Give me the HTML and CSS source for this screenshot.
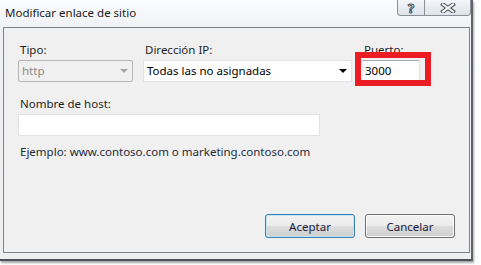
FILE: index.html
```html
<!DOCTYPE html>
<html>
<head>
  <meta charset="utf-8">
  <title>Modificar enlace de sitio</title>
  <link rel="stylesheet" href="styles.css">
</head>
<body>
  <div class="window">
    <div class="titlebar">
      <span class="title">Modificar enlace de sitio</span>
      <div class="caption">
        <span class="cap_btn help">?</span>
        <span class="cap_btn close">
          <svg width="16" height="10" viewBox="0 0 16 10">
            <path d="M3 1.5 L13 8.5 M13 1.5 L3 8.5" stroke="#4a4f57" stroke-width="4" stroke-linecap="square" fill="none"/>
            <path d="M3 1.5 L13 8.5 M13 1.5 L3 8.5" stroke="#ffffff" stroke-width="2" stroke-linecap="square" fill="none"/>
          </svg>
        </span>
      </div>
    </div>
    <div class="client">
      <div class="fields">
        <div class="field">
          <label>Tipo:</label>
          <div class="select disabled">http<span class="arrow"></span></div>
        </div>
        <div class="field">
          <label>Dirección IP:</label>
          <div class="select">Todas las no asignadas<span class="arrow"></span></div>
        </div>
        <div class="field">
          <label>Puerto:</label>
          <div class="textbox port">3000</div>
        </div>
      </div>
      <div class="host">
        <label>Nombre de host:</label>
        <div class="textbox wide"></div>
      </div>
      <p class="example">Ejemplo: www.contoso.com o marketing.contoso.com</p>
      <div class="actions">
        <button class="button default">Aceptar</button>
        <button class="button">Cancelar</button>
      </div>
    </div>
    <div class="highlight"></div>
  </div>
</body>
</html>
```

FILE: styles.css
```css
html {
  font-family: "Noto Sans", "Open Sans", sans-serif;
  font-size: 11.5px;
}
body {
  margin: 0;
  width: 481px;
  height: 265px;
  background-color: #ffffff;
  overflow: hidden;
}
.window {
  position: relative;
  width: 473px;
  height: 261px;
  box-sizing: border-box;
  padding-left: 3px;
  background: linear-gradient(#fbfcfd, #eef1f4 30px, #eceef0);
  border-right: 2px solid #5f6266;
  border-bottom: 2px solid #4e5155;
  box-shadow: 1px 2px 2px rgba(0,0,0,.35);
}
.titlebar {
  height: 27px;
  display: flex;
  align-items: flex-start;
  justify-content: space-between;
}
.title {
  margin: 5px 0 0 2px;
  color: #1b1b1b;
  line-height: 16px;
}
.caption {
  display: flex;
}
.cap_btn {
  height: 16px;
  box-sizing: border-box;
  border: 1px solid #8b8f96;
  border-top: none;
  background: linear-gradient(#f4f6f9, #dde3ea);
  display: flex;
  align-items: center;
  justify-content: center;
}
.help {
  width: 28px;
  border-radius: 0 0 0 4px;
  font-weight: bold;
  font-size: 13px;
  color: #ffffff;
  -webkit-text-stroke: 1px #4a4f57;
  line-height: 14px;
}
.close {
  width: 46px;
  border-left: none;
  border-radius: 0 0 4px 0;
}
.client {
  width: 467px;
  height: 226px;
  box-sizing: border-box;
  border: 1px solid #7f8388;
  background-color: #f0f0f0;
  padding: 14px;
  display: flex;
  flex-direction: column;
  color: #1e1e1e;
}
label {
  display: block;
  line-height: 16px;
  padding-left: 2px;
  margin-bottom: 2px;
}
.fields {
  display: grid;
  grid-template-columns: 115px 209px 58px;
  column-gap: 10px;
}
.select {
  position: relative;
  height: 22px;
  box-sizing: border-box;
  border: 1px solid #e2e3ea;
  background-color: #ffffff;
  padding-left: 3px;
  line-height: 20px;
  color: #000000;
}
.select.disabled {
  border: 1px solid #b5b5b5;
  border-radius: 2px;
  background-color: #f0f0f0;
  color: #8a8a8a;
}
.arrow {
  position: absolute;
  right: 4px;
  top: 8px;
  border-left: 4px solid transparent;
  border-right: 4px solid transparent;
  border-top: 4px solid #000000;
}
.disabled .arrow {
  border-top-color: #a6a6a6;
}
.textbox {
  height: 21px;
  box-sizing: border-box;
  border: 1px solid #abadb3;
  border-color: #abadb3 #e2e3ea #e3e9ef #e2e3ea;
  background-color: #ffffff;
  padding-left: 2px;
  line-height: 19px;
  color: #000000;
}
.textbox.wide {
  width: 302px;
  height: 22px;
  border-color: #e2e3ea;
}
.host {
  margin-top: 14px;
}
.example {
  margin: 8px 0 0 2px;
  line-height: 16px;
  color: #1f2b38;
}
.actions {
  margin-top: auto;
  display: flex;
  justify-content: flex-end;
  gap: 10px;
}
.button {
  width: 90px;
  height: 24px;
  font-family: inherit;
  font-size: 11.5px;
  color: #1a1a40;
  border: 1px solid #707070;
  border-radius: 3px;
  background: linear-gradient(#f2f2f2, #ebebeb 50%, #dddddd 50%, #cfcfcf);
  box-shadow: inset 0 0 0 1px rgba(255,255,255,.8);
  padding: 0;
}
.button.default {
  border-color: #3c7fb1;
  box-shadow: inset 0 0 0 1px #bfe8f7;
}
.highlight {
  position: absolute;
  left: 355px;
  top: 52px;
  width: 76px;
  height: 34px;
  box-sizing: border-box;
  border: 6px solid #ec1c24;
}
```
